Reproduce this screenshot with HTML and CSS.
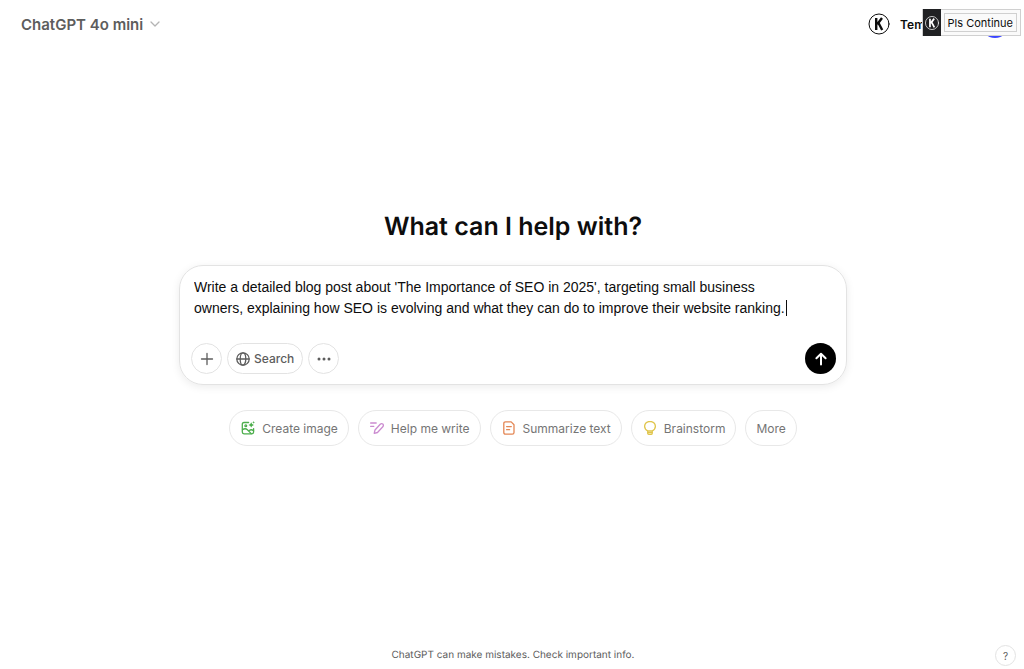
FILE: index.html
```html
<!DOCTYPE html>
<html lang="en">

<head>
  <meta charset="UTF-8">
  <meta name="viewport" content="width=device-width, initial-scale=1.0">
  <title>ChatGPT</title>
  <link rel="stylesheet" href="styles.css">
</head>

<body>
  <header class="header">
    <button class="model" type="button">
      ChatGPT 4o mini
      <svg width="12" height="12" viewBox="0 0 12 12"><path d="M2 4l4 4 4-4" /></svg>
    </button>
    <div class="account">
      <svg class="k-logo" width="22" height="22" viewBox="0 0 22 22">
        <circle cx="11" cy="11" r="10" />
        <path d="M8.2 5v12M14 5L9.3 11.2M10.4 9.8L14.2 17" />
      </svg>
      <button class="temporary" type="button">Tem</button>
      <span class="avatar"></span>
    </div>
    <div class="extension">
      <span class="extension-logo">
        <svg class="k-logo" width="16" height="16" viewBox="0 0 22 22">
          <circle cx="11" cy="11" r="9" />
          <path d="M8.2 5v12M14 5L9.3 11.2M10.4 9.8L14.2 17" />
        </svg>
      </span>
      <button class="continue" type="button">Pls Continue</button>
    </div>
  </header>

  <main class="main">
    <h1>What can I help with?</h1>

    <form class="composer">
      <div class="prompt">
        <textarea rows="2" aria-label="Message ChatGPT" spellcheck="false">Write a detailed blog post about 'The Importance of SEO in 2025', targeting small business owners, explaining how SEO is evolving and what they can do to improve their website ranking.</textarea>
        <span class="caret"></span>
      </div>
      <div class="tools">
        <button class="tool round" type="button" aria-label="Attach">
          <svg width="14" height="14" viewBox="0 0 14 14"><path d="M7 1.5v11M1.5 7h11" /></svg>
        </button>
        <button class="tool" type="button">
          <svg width="14" height="14" viewBox="0 0 14 14">
            <circle cx="7" cy="7" r="6.2" />
            <ellipse cx="7" cy="7" rx="2.8" ry="6.2" />
            <path d="M1 7h12" />
          </svg>
          Search
        </button>
        <button class="tool round" type="button" aria-label="More tools">
          <svg class="dots" width="14" height="14" viewBox="0 0 14 14">
            <circle cx="2" cy="7" r="1.5" /><circle cx="7" cy="7" r="1.5" /><circle cx="12" cy="7" r="1.5" />
          </svg>
        </button>
        <button class="send" type="submit" aria-label="Send">
          <svg width="14" height="14" viewBox="0 0 14 14"><path d="M7 12.5V2M2.4 6.3L7 1.8l4.6 4.5" /></svg>
        </button>
      </div>
    </form>

    <div class="chips">
      <button class="chip green" type="button">
        <svg width="14" height="14" viewBox="0 0 14 14">
          <path d="M7.6 1.5H3Q1.3 1.5 1.3 3.2v7.9q0 1.7 1.7 1.7h7.9q1.7 0 1.7-1.7V7.6" />
          <path d="M1.5 8.8Q4.2 6.6 6.4 8.8T10.2 12.6M8.3 9.5q2-1.6 4.2.3" />
          <circle cx="4.8" cy="4.7" r=".9" />
          <path class="solid" d="M10.2 1.2q.4 2.2 2.8 2.7-2.4.5-2.8 2.7-.4-2.2-2.7-2.7 2.3-.5 2.7-2.7zM12.6 0l.4 1 1 .4-1 .4-.4 1-.4-1-1-.4 1-.4z" />
        </svg>
        Create image
      </button>
      <button class="chip purple" type="button">
        <svg width="14" height="14" viewBox="0 0 14 14">
          <path d="M.6 2h5.6M.6 5.3h3.2" />
          <path d="M4.2 12.4l.8-3.4 5.2-5.8q1.3-1.2 2.7-.1 1 1.3-.1 2.7L7.5 11.5z" />
        </svg>
        Help me write
      </button>
      <button class="chip orange" type="button">
        <svg width="14" height="14" viewBox="0 0 14 14">
          <path d="M3.5.9h5.7L12 3.7v7.7q0 1.7-1.7 1.7H3.5q-1.7 0-1.7-1.7V2.6Q1.8.9 3.5.9zM4.6 5.6h4.7M4.6 8.7h3" />
        </svg>
        Summarize text
      </button>
      <button class="chip yellow" type="button">
        <svg width="14" height="14" viewBox="0 0 14 14">
          <path d="M4.7 9.8Q1.6 8.3 1.6 5.3 2 .8 7 .4q5 .4 5.4 4.9 0 3-3.1 4.5v2.1q0 1.5-1.5 1.5H6.2q-1.5 0-1.5-1.5zM4.7 10h4.6M5 11.7h4" />
        </svg>
        Brainstorm
      </button>
      <button class="chip plain" type="button">More</button>
    </div>
  </main>

  <footer class="footer">
    <p>ChatGPT can make mistakes. Check important info.</p>
    <button class="help" type="button" aria-label="Help">?</button>
  </footer>
</body>

</html>
```

FILE: styles.css
```css
* {
  box-sizing: border-box;
}

body {
  margin: 0;
  min-height: 100vh;
  display: flex;
  flex-direction: column;
  background: #fff;
  color: #0d0d0d;
  font-family: Inter, "Liberation Sans", sans-serif;
  font-size: 13px;
  text-rendering: geometricPrecision;
}

button {
  font: inherit;
  color: inherit;
  background: none;
  border: 0;
  padding: 0;
  cursor: pointer;
}

svg {
  flex: none;
  fill: none;
  stroke: currentColor;
  stroke-width: 1.3;
  stroke-linecap: round;
  stroke-linejoin: round;
}

.header {
  display: flex;
  align-items: center;
  justify-content: space-between;
  height: 48px;
  padding: 0 15px 0 21px;
}

.model {
  display: flex;
  align-items: center;
  gap: 6px;
  color: #5d5d5d;
  font-size: 15px;
  font-weight: 600;
}

.model svg {
  color: #b4b4b4;
}

.account {
  display: flex;
  align-items: center;
  gap: 10px;
}

.k-logo {
  stroke-width: 1;
}

.k-logo path {
  stroke-width: 2.4;
  stroke-linecap: butt;
  stroke-linejoin: miter;
}

.temporary {
  font-size: 12px;
  font-weight: 600;
}

.avatar {
  width: 28px;
  height: 28px;
  margin-left: 46px;
  border-radius: 50%;
  background: #3c46ff;
}

/* browser extension popup, floats over the account area */
.extension {
  position: absolute;
  top: 9px;
  right: 3px;
  display: flex;
  align-items: center;
  height: 27px;
  padding-right: 3px;
  border: 1px solid #d0d0d0;
  background: #fafafa;
}

.extension-logo {
  display: flex;
  align-items: center;
  justify-content: center;
  width: 18px;
  height: 27px;
  margin-right: 3px;
  background: #202123;
  color: #fff;
}

.continue {
  height: 19px;
  padding: 0 3px;
  border: 1px solid #d0d0d0;
  font-size: 11px;
}

.main {
  flex: 1;
  display: flex;
  flex-direction: column;
  align-items: center;
  padding: 163px 16px 0 18px;
}

h1 {
  margin: 0 0 22px;
  font-size: 25px;
  line-height: 32px;
  font-weight: 600;
}

.composer {
  width: 100%;
  max-width: 668px;
  padding: 11px 10px 10px 11px;
  border: 1px solid #e3e3e3;
  border-radius: 24px;
  box-shadow: 0 2px 8px rgba(0, 0, 0, 0.08);
}

.prompt {
  position: relative;
  padding: 0 36px 0 3px;
}

textarea {
  display: block;
  width: 100%;
  padding: 0;
  border: 0;
  outline: 0;
  resize: none;
  overflow: hidden;
  background: none;
  color: inherit;
  font-family: "Liberation Sans", Arial, sans-serif;
  font-size: 14px;
  line-height: 21px;
}

.caret {
  position: absolute;
  left: 595px;
  bottom: 3px;
  width: 1px;
  height: 16px;
  background: #0d0d0d;
}

.tools {
  display: flex;
  gap: 5px;
  margin-top: 24px;
}

.tool {
  display: flex;
  align-items: center;
  justify-content: center;
  gap: 4px;
  height: 31px;
  padding: 0 8px;
  border: 1px solid #e3e3e3;
  border-radius: 16px;
  color: #5d5d5d;
  font-size: 12px;
  font-weight: 500;
}

.round {
  width: 31px;
  padding: 0;
}

.dots {
  fill: currentColor;
  stroke: none;
}

.send {
  display: flex;
  align-items: center;
  justify-content: center;
  width: 31px;
  height: 31px;
  margin-left: auto;
  border-radius: 50%;
  background: #000;
  color: #fff;
}

.send svg {
  stroke-width: 2;
}

.chips {
  display: flex;
  flex-wrap: wrap;
  justify-content: center;
  gap: 9px;
  margin-top: 25px;
}

.chip {
  display: flex;
  align-items: center;
  gap: 7px;
  height: 36px;
  padding: 0 10px 0 11px;
  border: 1px solid #e8e8e8;
  border-radius: 18px;
  color: #757575;
  font-size: 12px;
}

.plain {
  padding: 0 10px;
}

.chip .solid {
  fill: currentColor;
  stroke: none;
}

.green svg {
  color: #4cae4c;
}

.purple svg {
  color: #cb8bd0;
}

.orange svg {
  color: #e48755;
}

.yellow svg {
  color: #e0c54b;
}

.footer {
  position: relative;
  padding: 0 14px 6px 16px;
  text-align: center;
  color: #5d5d5d;
  font-size: 10px;
}

.footer p {
  margin: 0;
  line-height: 16px;
}

.help {
  position: absolute;
  right: 8px;
  bottom: 3px;
  width: 21px;
  height: 21px;
  border: 1px solid #e3e3e3;
  border-radius: 50%;
}
```
